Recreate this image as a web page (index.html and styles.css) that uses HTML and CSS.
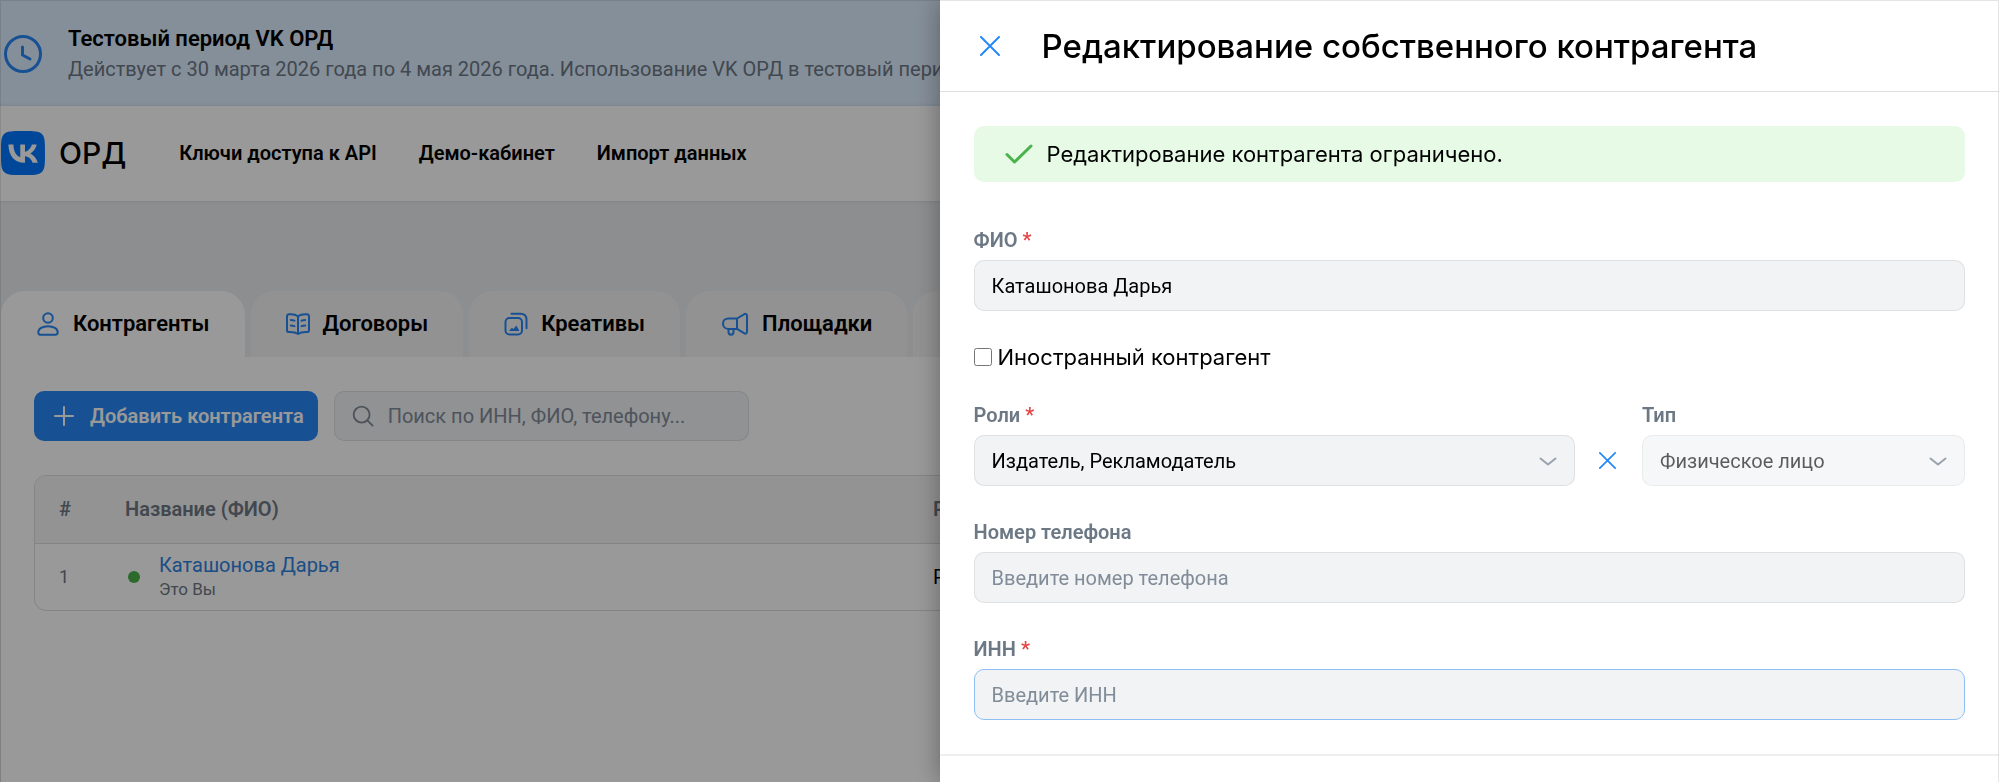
FILE: index.html
```html
<!DOCTYPE html>
<html lang="ru">
<head>
<meta charset="utf-8">
<title>VK ОРД</title>
<link rel="stylesheet" href="styles.css">
</head>
<body>
<div class="page">
  <section class="banner">
    <svg class="banner-icon" viewBox="0 0 40 40"><circle cx="19" cy="20" r="17.500"/><path d="M18.500 13v8l7.500 4"/></svg>
    <div>
      <h2 class="banner-title">Тестовый период VK ОРД</h2>
      <p class="banner-text">Действует с 30 марта 2026 года по 4 мая 2026 года. Использование VK ОРД в тестовый период бесплатно.</p>
    </div>
  </section>
  <header class="topbar">
    <a class="brand" href="#">
      <svg class="brand-mark" viewBox="0 0 48 48"><path fill="#07f" d="M0 23C0 12.200 0 6.700 3.400 3.400 6.700 0 12.200 0 23 0h2c10.800 0 16.300 0 19.600 3.400C48 6.700 48 12.200 48 23v2c0 10.800 0 16.300-3.400 19.600C41.300 48 35.800 48 25 48h-2c-10.800 0-16.300 0-19.600-3.400C0 41.300 0 35.800 0 25z"/><path fill="#fff" d="M25.540 34.580c-10.940 0-17.180-7.500-17.440-19.980h5.480c.18 9.160 4.220 13.040 7.420 13.840V14.600h5.160v7.900c3.160-.34 6.480-3.940 7.600-7.900h5.160c-.86 4.880-4.460 8.480-7.020 9.960 2.560 1.200 6.660 4.340 8.220 10.020h-5.680c-1.220-3.800-4.260-6.740-8.280-7.140v7.140z"/></svg>
      <span>ОРД</span>
    </a>
    <nav class="menu">
      <a href="#">Ключи доступа к API</a>
      <a href="#">Демо-кабинет</a>
      <a href="#">Импорт данных</a>
    </nav>
  </header>
  <main class="main">
    <nav class="tabs">
      <a class="tab tab-active" href="#">
        <svg class="tab-icon" viewBox="0 0 24 24"><circle cx="12" cy="6" r="4.800"/><path d="M12 14.200c5.500 0 9.700 2.600 9.700 6 0 1.800-.9 2.600-2.600 2.600H4.900c-1.700 0-2.600-.8-2.600-2.600 0-3.400 4.200-6 9.700-6z"/></svg>
        Контрагенты</a>
      <a class="tab" href="#">
        <svg class="tab-icon" viewBox="0 0 24 24"><path d="M12 4.200C9.500 2.200 6 2 3 2.200 1.500 2.300 1 3 1 4.500v13.400c0 1.600.7 2.200 2.200 2.200 3.300-.1 6.300.1 8.800 1.900 2.500-1.800 5.500-2 8.800-1.900 1.500 0 2.200-.6 2.200-2.200V4.500c0-1.500-.5-2.200-2-2.300-3-.2-6.500 0-9 2zM12 4.200V22M4.800 8c1.300 0 2.500.2 3.700.6M4.800 13.500c1.300 0 2.500.2 3.700.6M19.200 8c-1.300 0-2.500.2-3.700.6M19.200 13.500c-1.300 0-2.500.2-3.700.6"/></svg>
        Договоры</a>
      <a class="tab" href="#">
        <svg class="tab-icon" viewBox="0 0 24 24"><rect x="1.500" y="6" width="16.500" height="16.500" rx="4"/><path d="M7.500 1.700h9c4 0 6 2 6 6v8.500"/><path class="solid" d="M5 19l2.800-3.200 1.600 1.200 3-3.500 3 5.500z"/></svg>
        Креативы</a>
      <a class="tab" href="#">
        <svg class="tab-icon tab-icon-wide" viewBox="0 0 28 24"><path d="M16 6.500H7.500C4 6.500 2 8.800 2 11.700s2 5.200 5.500 5.200H16zM16 6.500l7-4.200c1.700-1 3-.3 3 1.700v15.500c0 2-1.300 2.700-3 1.700l-7-4.300M7.500 17v3c0 1.700 1 2.700 2.500 2.700s2.500-1 2.500-2.700v-3"/></svg>
        Площадки</a>
      <a class="tab" href="#">
        <svg class="tab-icon" viewBox="0 0 24 24"><path d="M4 22V12M12 22V3M20 22v-7"/></svg>
        Статистика</a>
    </nav>
    <section class="content">
      <div class="toolbar">
        <button class="add" type="button">
          <svg class="add-icon" viewBox="0 0 20 20"><path d="M10 1v18M1 10h18"/></svg>
          Добавить контрагента</button>
        <label class="search">
          <svg class="search-icon" viewBox="0 0 24 24"><circle cx="10.500" cy="10.500" r="8.700"/><path d="M17 17l5.500 5.500"/></svg>
          <input type="search" aria-label="Поиск" placeholder="Поиск по ИНН, ФИО, телефону...">
        </label>
      </div>
      <div class="table-box">
        <table class="table">
          <thead><tr><th class="col-num">#</th><th class="col-name">Название (ФИО)</th><th>Роли</th></tr></thead>
          <tbody><tr>
            <td class="num">1</td>
            <td><div class="person"><span class="dot"></span><div><a class="person-link" href="#">Каташонова Дарья</a><div class="person-note">Это Вы</div></div></div></td>
            <td>Рекламодатель</td>
          </tr></tbody>
        </table>
      </div>
    </section>
  </main>
</div>
<div class="overlay"></div>
<aside class="drawer" role="dialog" aria-labelledby="drawer-title">
  <header class="drawer-head">
    <button class="icon-button" type="button" aria-label="Закрыть"><svg class="close" viewBox="0 0 20 20"><path d="M1 1l18 18M19 1L1 19"/></svg></button>
    <h1 class="drawer-title" id="drawer-title">Редактирование собственного контрагента</h1>
  </header>
  <form class="form">
    <div class="alert">
      <svg class="alert-icon" viewBox="0 0 28 20"><path d="M2 10.500l7.500 7.500L26 2"/></svg>
      Редактирование контрагента ограничено.
    </div>
    <div class="field">
      <label class="label" for="fio">ФИО <span class="req">*</span></label>
      <input class="control" id="fio" type="text" value="Каташонова Дарья">
    </div>
    <label class="check"><input class="checkbox" type="checkbox">Иностранный контрагент</label>
    <div class="row">
      <div class="field field-roles">
        <label class="label" for="roles">Роли <span class="req">*</span></label>
        <div class="select">
          <select class="control" id="roles"><option>Издатель, Рекламодатель</option></select>
          <svg class="chevron" viewBox="0 0 18 10"><path d="M1.500 1.500L9 7.500l7.500-6"/></svg>
        </div>
      </div>
      <button class="icon-button clear" type="button" aria-label="Очистить роли"><svg class="close close-small" viewBox="0 0 20 20"><path d="M1 1l18 18M19 1L1 19"/></svg></button>
      <div class="field field-type">
        <label class="label" for="type">Тип</label>
        <div class="select">
          <select class="control" id="type" disabled><option>Физическое лицо</option></select>
          <svg class="chevron" viewBox="0 0 18 10"><path d="M1.500 1.500L9 7.500l7.500-6"/></svg>
        </div>
      </div>
    </div>
    <div class="field">
      <label class="label" for="phone">Номер телефона</label>
      <input class="control" id="phone" type="tel" placeholder="Введите номер телефона">
    </div>
    <div class="field">
      <label class="label" for="inn">ИНН <span class="req">*</span></label>
      <input class="control control-focus" id="inn" type="text" placeholder="Введите ИНН">
    </div>
  </form>
  <footer class="drawer-foot"></footer>
</aside>
<div class="frame"></div>
</body>
</html>
```
FILE: styles.css
```css
:root {
  --blue: #2787f5;
  --link: #2d81e0;
  --gray: #6d7885;
  --field: #f2f3f5;
  --line: rgba(0, 0, 0, 0.08);
}
* { box-sizing: border-box; }
html, body { height: 100%; }
body {
  margin: 0;
  overflow: hidden;
  background: #ebedf0;
  color: #000;
  font: 400 20px/24px Roboto, "Liberation Sans", sans-serif;
}
h1, h2, p { margin: 0; }
a { color: inherit; text-decoration: none; }
svg { display: block; flex: none; fill: none; stroke: currentColor; stroke-linecap: round; stroke-linejoin: round; stroke-width: 2; }
button, input, select { font: inherit; color: inherit; }

.page { display: flex; flex-direction: column; height: 100%; overflow: hidden; }
.banner { display: flex; align-items: center; gap: 24px; height: 106px; padding: 2px 0 0 4px; background: #deeeff; }
.banner-icon { width: 40px; height: 40px; color: var(--blue); stroke-width: 3; }
.banner-title { font-size: 22px; line-height: 30px; font-weight: 600; }
.banner-text { line-height: 30px; color: #6d7885; white-space: nowrap; }

.topbar { display: flex; align-items: center; gap: 53px; height: 95px; padding: 0 0 2px 1px; background: #fff; box-shadow: 0 0 4px rgba(0, 0, 0, 0.12); }
.brand { display: flex; align-items: center; gap: 14px; font: 500 30px/36px Inter, sans-serif; }
.brand-mark { width: 44px; height: 44px; stroke: none; }
.menu { display: flex; gap: 42px; font-weight: 600; }

.main { flex: 1; display: flex; flex-direction: column; padding: 90px 1px 0; }
.tabs { display: flex; gap: 6px; }
.tab { display: flex; align-items: center; gap: 13px; height: 66px; padding: 0 35px; border-radius: 24px 24px 0 0; background: #f4f4f5; font-size: 22px; font-weight: 600; }
.tab-active { background: #fff; }
.tab-icon { width: 24px; height: 24px; color: var(--blue); }
.tab-icon-wide { width: 28px; }
.solid { fill: currentColor; stroke: none; }
.content { flex: 1; display: flex; flex-direction: column; gap: 34px; padding: 34px 33px; background: #fff; }

.toolbar { display: flex; gap: 16px; }
.add { display: flex; align-items: center; gap: 16px; height: 50px; padding: 0 14px 0 20px; border: 0; border-radius: 10px; background: var(--blue); color: #fff; font-weight: 600; }
.add-icon { width: 20px; height: 20px; }
.search { display: flex; align-items: center; gap: 14px; width: 415px; height: 50px; padding: 0 17px; border: 1px solid var(--line); border-radius: 10px; background: var(--field); color: #818c99; }
.search-icon { width: 22px; height: 22px; }
.search input { flex: 1; min-width: 0; padding: 0; border: 0; background: none; outline: 0; }
::placeholder { color: #818c99; opacity: 1; }

.table-box { border: 1px solid #dcdcdd; border-radius: 12px; overflow: hidden; }
.table { width: 100%; border-collapse: collapse; table-layout: fixed; }
.table th, .table td { height: 67px; padding: 0 0 0 24px; text-align: left; }
.table th { background: #f5f5f5; color: var(--gray); font-weight: 600; border-bottom: 1px solid #dcdcdd; }
.col-num { width: 66px; }
.col-name { width: 808px; }
.table .num { color: var(--gray); font-size: 18px; }
.person { display: flex; align-items: center; gap: 19px; padding-left: 3px; }
.dot { width: 12px; height: 12px; border-radius: 50%; background: #4bb34b; }
.person-link { color: var(--link); }
.person-note { color: var(--gray); font-size: 17px; }

.overlay { position: fixed; inset: 0; background: rgba(0, 0, 0, 0.4); }
.drawer { position: fixed; top: 0; right: 0; bottom: 0; width: 53%; display: flex; flex-direction: column; background: #fff; box-shadow: 0 0 24px rgba(0, 0, 0, 0.35); font-family: Inter, sans-serif; }
.drawer-head { display: flex; align-items: center; gap: 42px; height: 92px; padding: 0 34px 0 40px; border-bottom: 1px solid #dfdfe0; }
.drawer-title { font-size: 33px; line-height: 40px; font-weight: 500; white-space: nowrap; }
.icon-button { display: flex; padding: 0; border: 0; background: none; color: var(--blue); }
.close { width: 20px; height: 20px; }
.close-small { width: 17px; height: 17px; }
.form { display: flex; flex-direction: column; gap: 34px; padding: 34px; }
.alert { display: flex; align-items: center; gap: 14px; height: 56px; margin-bottom: 12px; padding: 0 31px; border-radius: 10px; background: #e6fae6; font-size: 22px; }
.alert-icon { width: 28px; height: 20px; color: #4bb34b; stroke-width: 3; }
.field { display: flex; flex-direction: column; gap: 8px; font-family: Roboto, "Liberation Sans", sans-serif; }
.label { color: var(--gray); font-weight: 600; }
.req { color: #e64646; }
.control { width: 100%; height: 51px; padding: 0 17px; border: 1px solid var(--line); border-radius: 10px; background: var(--field); outline: 0; appearance: none; }
.control-focus { border-color: #8fc0f5; }
.control:disabled { opacity: 0.64; color: #000; }
.check { display: flex; align-items: center; gap: 6px; font-size: 22px; }
.checkbox { width: 18px; height: 18px; margin: 0; }
.row { display: flex; align-items: flex-end; gap: 24px; }
.field-roles { flex: 1; }
.field-type { width: 323px; }
.clear { width: 19px; height: 51px; align-items: center; }
.select { position: relative; }
.chevron { position: absolute; right: 18px; top: 22px; width: 18px; height: 10px; color: #99a2ad; pointer-events: none; }
.drawer-foot { flex: 1; border-top: 2px solid #efeff0; }
.frame { position: fixed; inset: 0; border: 1px solid rgba(0, 0, 0, 0.1); border-bottom: 0; pointer-events: none; }
```
